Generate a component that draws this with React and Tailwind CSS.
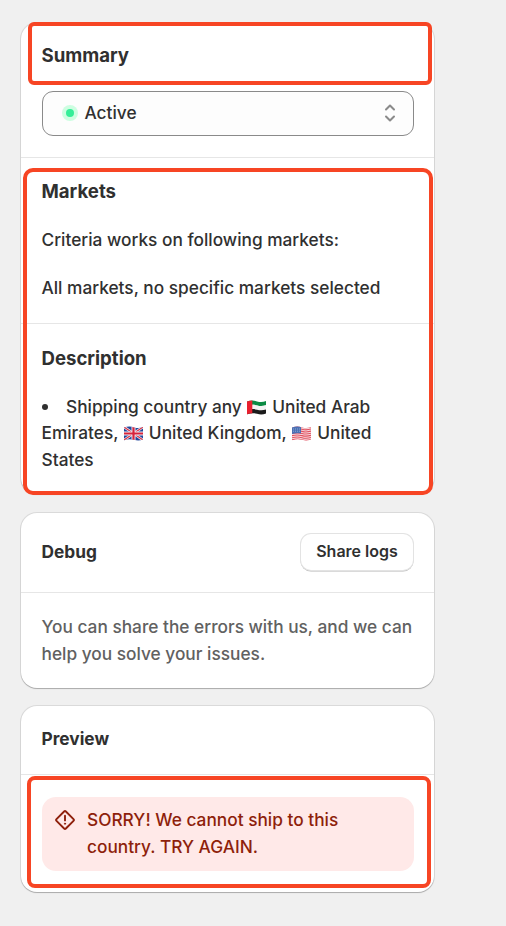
import React from 'react';

const UaeFlag = () => (
  <svg viewBox="0 0 19 15" className="inline-block w-[19px] h-[15px] ml-[0.4px] mr-[1.8px] align-[-2px]">
    <path d="M0 1.6C4 .2 7 .4 10 1.4c3 .9 6 .9 9-.4v4.3c-3 1-6 1-9 .2C7 4.700 4 4.500 0 5.500z" fill="#0b8a43" />
    <path d="M0 5.500C4 4.500 7 4.700 10 5.500c3 .8 6 .8 9-.2v4.200c-3 1-6 1-9 .2-3-.8-6-1-10 .2z" fill="#f3f3f3" />
    <path d="M0 9.900c4-1.200 7-1 10-.2 3 .8 6 .8 9-.2v4c-3 1.200-6 1.200-9 .3-3-.9-6-.9-10 .4z" fill="#1b1b1b" />
    <path d="M0 1.600c2-.7 3.700-1 5.300-1v12.600c-1.600 0-3.300.3-5.300 1z" fill="#e8202f" />
  </svg>
);

const UkFlag = () => (
  <svg viewBox="0 0 19 15" className="inline-block w-[19px] h-[15px] mx-[1.2px] align-[-2px]">
    <defs>
      <clipPath id="uk">
        <path d="M0 1.600C4 .2 7 .4 10 1.400c3 .9 6 .9 9-.4v12.500c-3 1.200-6 1.200-9 .3-3-.9-6-.9-10 .4z" />
      </clipPath>
    </defs>
    <g clipPath="url(#uk)">
      <path d="M0 0h19v15H0z" fill="#23479c" />
      <path d="M0 1l19 13M19 1L0 14" stroke="#f2f0f5" strokeWidth="2.600" />
      <path d="M0 1l19 13M19 1L0 14" stroke="#d83348" strokeWidth="1.100" />
      <path d="M9.500 0v15M0 7.500h19" stroke="#f2f0f5" strokeWidth="4" />
      <path d="M9.500 0v15M0 7.500h19" stroke="#d8233b" strokeWidth="2.200" />
    </g>
  </svg>
);

const UsFlag = () => (
  <svg viewBox="0 0 19 15" className="inline-block w-[19px] h-[15px] mx-[1.2px] align-[-2px]">
    <defs>
      <clipPath id="us">
        <path d="M0 1.600C4 .2 7 .4 10 1.400c3 .9 6 .9 9-.4v12.500c-3 1.200-6 1.200-9 .3-3-.9-6-.9-10 .4z" />
      </clipPath>
    </defs>
    <g clipPath="url(#us)">
      <path d="M0 0h19v15H0z" fill="#f6dfe2" />
      {[0.9, 3, 5.1, 7.2, 9.3, 11.4, 13.5].map((y) => (
        <path key={y} d={`M0 ${y + 0.3}c4-1 7-.8 10 0s6 .7 9-.3`} stroke="#e2505f" strokeWidth="1.100" fill="none" />
      ))}
      <path d="M0 0h9v7.600c-3-.6-6-.5-9 .4z" fill="#4a70b4" />
      <path d="M1 3h7.500M1 5.200h7.500" stroke="#a9bde0" strokeWidth=".7" strokeDasharray="1 1" />
    </g>
  </svg>
);

const AlertIcon = () => (
  <svg viewBox="0 0 20 20" className="w-5 h-5 shrink-0" fill="none" stroke="#8e1f0b" strokeWidth="1.900" strokeLinecap="round" strokeLinejoin="round">
    <path d="M9.100 1.500a1.300 1.300 0 0 1 1.800 0l7.600 7.600a1.300 1.300 0 0 1 0 1.800l-7.600 7.600a1.300 1.300 0 0 1-1.800 0L1.500 10.900a1.300 1.300 0 0 1 0-1.800z" />
    <path d="M10 5.800v4.600" />
    <circle cx="10" cy="13.700" r=".6" fill="#8e1f0b" strokeWidth="1" />
  </svg>
);

const SelectIcon = () => (
  <svg viewBox="0 0 12 18" className="w-3 h-[18px]" fill="none" stroke="#8a8a8a" strokeWidth="2" strokeLinecap="round" strokeLinejoin="round">
    <path d="M2 5.500l4-4 4 4M2 12.500l4 4 4-4" />
  </svg>
);

const Card = ({ className, children }) => (
  <section className={`relative bg-white rounded-[16px] shadow-[0_0_0_1px_rgba(0,0,0,0.09),0_1px_1px_rgba(0,0,0,0.22)] ${className}`}>
    {children}
  </section>
);

// Red outline drawn over the part of the card it points at
const Highlight = ({ className }) => (
  <div className={`absolute pointer-events-none border-4 border-[#f74524] ${className}`} />
);

const App = () => {
  return (
    <main className="min-h-screen bg-[#f0f0f0] pt-[23px] pl-[21px] text-[17.3px] leading-[26.67px] font-[450] text-[#303030] font-['Inter',sans-serif]">
      <div className="w-[413px] flex flex-col">
        <Card className="h-[471px]">
          <div className="h-[135px] border-b border-[#e6e6e6] px-[20.5px] pt-[19px]">
            <h2 className="text-[18.6px] font-[650]">Summary</h2>
            <div className="mt-[22px] ml-[0.5px] h-[45px] w-[372px] rounded-[11px] border border-[#8a8a8a] bg-[#fdfdfd] flex items-center pl-[18.5px] pr-[17px]">
              <span className="w-4 h-4 rounded-full bg-[#cdfee1] flex items-center justify-center">
                <span className="w-2 h-2 rounded-full bg-[#35ee98]" />
              </span>
              <span className="ml-[7px] flex-1">Active</span>
              <SelectIcon />
            </div>
          </div>
          <div className="h-[166px] border-b border-[#e6e6e6] px-[20.5px] pt-5">
            <h2 className="text-[18.6px] font-[650]">Markets</h2>
            <p className="mt-[22px]">Criteria works on following markets:</p>
            <p className="mt-[22px]">All markets, no specific markets selected</p>
          </div>
          <div className="px-[20.5px] pt-[21px]">
            <h2 className="text-[18.6px] font-[650]">Description</h2>
            <ul className="mt-[22px]">
              <li>
                <span className="inline-block w-[6px] h-[6px] rounded-full bg-[#303030] mr-[18.5px] align-[3px]" />
                Shipping country any <UaeFlag /> United Arab
                <br />
                Emirates, <UkFlag /> United Kingdom, <UsFlag /> United
                <br />
                States
              </li>
            </ul>
          </div>
          <Highlight className="left-[7px] -top-px w-[404px] h-[63px] rounded-[6px]" />
          <Highlight className="left-[2px] top-[145px] w-[410px] h-[327px] rounded-[10px]" />
        </Card>

        <Card className="mt-[19px] h-[175px]">
          <div className="h-[80px] border-b border-[#e6e6e6] pl-[20.5px] pr-[21px] flex items-start justify-between">
            <h2 className="font-[650] mt-[26px]">Debug</h2>
            <button className="mt-[21px] w-[112px] h-9 pb-[2px] rounded-[10px] bg-white text-[16px] font-[600] shadow-[0_0_0_1px_#e3e3e3,0_1px_0_0.5px_#b5b5b5]">
              Share logs
            </button>
          </div>
          <p className="px-[20.5px] pt-5 leading-[27px] text-[#616161]">
            You can share the errors with us, and we can
            <br />
            help you solve your issues.
          </p>
        </Card>

        <Card className="mt-[18px] h-[186px]">
          <div className="h-[69px] border-b border-[#e6e6e6] px-[20.5px] pt-5">
            <h2 className="font-[650]">Preview</h2>
          </div>
          <div className="mt-[22px] ml-[21px] w-[372px] h-[74px] rounded-[14px] bg-[#ffe9e8] text-[#8e1f0b] flex pl-[13px] pt-[9px] leading-[27px]">
            <span className="pt-1">
              <AlertIcon />
            </span>
            <p className="ml-3">
              SORRY! We cannot ship to this
              <br />
              country. TRY AGAIN.
            </p>
          </div>
          <Highlight className="left-[6px] top-[70px] w-[404px] h-[112px] rounded-[8px]" />
        </Card>
      </div>
    </main>
  );
};

export default App;
